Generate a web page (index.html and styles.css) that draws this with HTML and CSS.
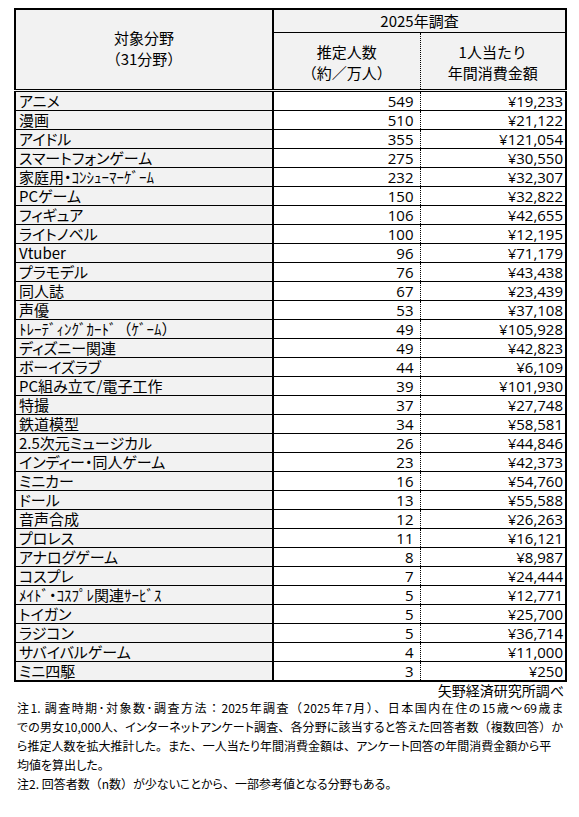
FILE: index.html
```html
<!DOCTYPE html>
<html lang="ja">
<head>
<meta charset="utf-8">
<title>対象分野 2025年調査</title>
<link rel="stylesheet" href="styles.css">
</head>
<body>
<div class="page">
  <table class="survey">
    <colgroup>
      <col class="c-name">
      <col class="c-num">
      <col class="c-amt">
    </colgroup>
    <thead>
      <tr>
        <th class="h-name" rowspan="2">対象分野<br>（31分野）</th>
        <th class="h-year" colspan="2">2025年調査</th>
      </tr>
      <tr>
        <th class="h-num">推定人数<br>（約／万人）</th>
        <th class="h-amt">1人当たり<br>年間消費金額</th>
      </tr>
    </thead>
    <tbody>
      <tr><td class="name">アニメ</td><td class="num">549</td><td class="amt">¥19,233</td></tr>
      <tr><td class="name">漫画</td><td class="num">510</td><td class="amt">¥21,122</td></tr>
      <tr><td class="name">アイドル</td><td class="num">355</td><td class="amt">¥121,054</td></tr>
      <tr><td class="name">スマートフォンゲーム</td><td class="num">275</td><td class="amt">¥30,550</td></tr>
      <tr><td class="name">家庭用・ｺﾝｼｭｰﾏｰｹﾞｰﾑ</td><td class="num">232</td><td class="amt">¥32,307</td></tr>
      <tr><td class="name">PCゲーム</td><td class="num">150</td><td class="amt">¥32,822</td></tr>
      <tr><td class="name">フィギュア</td><td class="num">106</td><td class="amt">¥42,655</td></tr>
      <tr><td class="name">ライトノベル</td><td class="num">100</td><td class="amt">¥12,195</td></tr>
      <tr><td class="name">Vtuber</td><td class="num">96</td><td class="amt">¥71,179</td></tr>
      <tr><td class="name">プラモデル</td><td class="num">76</td><td class="amt">¥43,438</td></tr>
      <tr><td class="name">同人誌</td><td class="num">67</td><td class="amt">¥23,439</td></tr>
      <tr><td class="name">声優</td><td class="num">53</td><td class="amt">¥37,108</td></tr>
      <tr><td class="name">ﾄﾚｰﾃﾞｨﾝｸﾞｶｰﾄﾞ<span class="fw">（</span>ｹﾞｰﾑ<span class="fw">）</span></td><td class="num">49</td><td class="amt">¥105,928</td></tr>
      <tr><td class="name">ディズニー関連</td><td class="num">49</td><td class="amt">¥42,823</td></tr>
      <tr><td class="name">ボーイズラブ</td><td class="num">44</td><td class="amt">¥6,109</td></tr>
      <tr><td class="name">PC組み立て/電子工作</td><td class="num">39</td><td class="amt">¥101,930</td></tr>
      <tr><td class="name">特撮</td><td class="num">37</td><td class="amt">¥27,748</td></tr>
      <tr><td class="name">鉄道模型</td><td class="num">34</td><td class="amt">¥58,581</td></tr>
      <tr><td class="name">2.5次元ミュージカル</td><td class="num">26</td><td class="amt">¥44,846</td></tr>
      <tr><td class="name">インディー・同人ゲーム</td><td class="num">23</td><td class="amt">¥42,373</td></tr>
      <tr><td class="name">ミニカー</td><td class="num">16</td><td class="amt">¥54,760</td></tr>
      <tr><td class="name">ドール</td><td class="num">13</td><td class="amt">¥55,588</td></tr>
      <tr><td class="name">音声合成</td><td class="num">12</td><td class="amt">¥26,263</td></tr>
      <tr><td class="name">プロレス</td><td class="num">11</td><td class="amt">¥16,121</td></tr>
      <tr><td class="name">アナログゲーム</td><td class="num">8</td><td class="amt">¥8,987</td></tr>
      <tr><td class="name">コスプレ</td><td class="num">7</td><td class="amt">¥24,444</td></tr>
      <tr><td class="name">ﾒｲﾄﾞ・ｺｽﾌﾟﾚ関連ｻｰﾋﾞｽ</td><td class="num">5</td><td class="amt">¥12,771</td></tr>
      <tr><td class="name">トイガン</td><td class="num">5</td><td class="amt">¥25,700</td></tr>
      <tr><td class="name">ラジコン</td><td class="num">5</td><td class="amt">¥36,714</td></tr>
      <tr><td class="name">サバイバルゲーム</td><td class="num">4</td><td class="amt">¥11,000</td></tr>
      <tr><td class="name">ミニ四駆</td><td class="num">3</td><td class="amt">¥250</td></tr>
    </tbody>
  </table>
  <p class="source">矢野経済研究所調べ</p>
  <div class="notes">
    <p class="note">
      <span class="line full">注1. 調査時期･対象数･調査方法<span class="fw">：</span>2025年調査<span class="fw">（</span>2025年7月<span class="fw">）、</span>日本国内在住の15歳<span class="fw">～</span>69歳ま</span>
      <span class="line full">での男女10,000人<span class="fw">、</span>インターネットアンケート調査<span class="fw">、</span>各分野に該当すると答えた回答者数<span class="fw">（</span>複数回答<span class="fw">）</span>か</span>
      <span class="line full short">ら推定人数を拡大推計した<span class="fw">。</span>また<span class="fw">、</span>一人当たり年間消費金額は<span class="fw">、</span>アンケート回答の年間消費金額から平</span>
      <span class="line">均値を算出した<span class="fw">。</span></span>
    </p>
    <p class="note">
      <span class="line">注2. 回答者数<span class="fw">（</span>n数<span class="fw">）</span>が少ないことから<span class="fw">、</span>一部参考値となる分野もある<span class="fw">。</span></span>
    </p>
  </div>
</div>
</body>
</html>
```
FILE: styles.css
```css
html, body {
  margin: 0;
  padding: 0;
  background: #ffffff;
}

.page {
  padding: 8px 0 0 14px;
  width: 552px;
  font-family: "Noto Sans CJK JP", sans-serif;
  color: #000;
}

.survey {
  border-collapse: collapse;
  table-layout: fixed;
  width: 551px;
  border: 2px solid #000;
}

.c-name { width: 258px; }
.c-num { width: 147px; }
.c-amt { width: 146px; }

.survey th {
  background: #f2f2f2;
  font-weight: normal;
  font-size: 15px;
  line-height: 21px;
  padding: 0;
  text-align: center;
  border: 1px solid #000;
}

.survey .h-name {
  border-right: 2px solid #000;
  border-bottom: 3px double #000;
  padding-bottom: 4px;
}

.survey .h-year {
  height: 22px;
  line-height: 22px;
  border-bottom: 1px solid #000;
}

.survey .h-num {
  height: 55px;
  border-right: 1px dotted #000;
  border-bottom: 3px double #000;
  padding-top: 1px;
}

.survey .h-amt {
  border-left: 1px dotted #000;
  border-bottom: 3px double #000;
  padding-top: 1px;
}

.survey td {
  height: 18px;
  line-height: 18px;
  padding: 0 3px;
  border-top: 1px solid #000;
  border-bottom: 1px solid #000;
  white-space: nowrap;
  overflow: hidden;
}

.survey .name {
  background: #f2f2f2;
  font-size: 15px;
  font-feature-settings: "palt";
  border-right: 2px solid #000;
  padding-left: 3px;
}

.survey .num,
.survey .amt {
  background: #ffffff;
  font-family: "Open Sans", "Noto Sans CJK JP", sans-serif;
  font-size: 15px;
  text-align: right;
}

.survey .num {
  border-right: 1px dotted #000;
  padding-right: 6px;
}

.survey .amt {
  border-left: 1px dotted #000;
  padding-right: 2px;
}

.fw {
  font-feature-settings: normal;
}

.source {
  margin: 0;
  width: 550px;
  text-align: right;
  font-size: 14px;
  line-height: 16px;
  font-feature-settings: "palt";
}

.notes {
  margin-left: 3px;
  width: 546px;
  font-size: 12px;
  line-height: 19px;
  font-feature-settings: "palt";
}

.note {
  margin: 0;
}

.line {
  display: block;
  white-space: nowrap;
}

.line.full {
  text-align: justify;
  text-align-last: justify;
}

.line.short {
  width: 532px;
}
```
